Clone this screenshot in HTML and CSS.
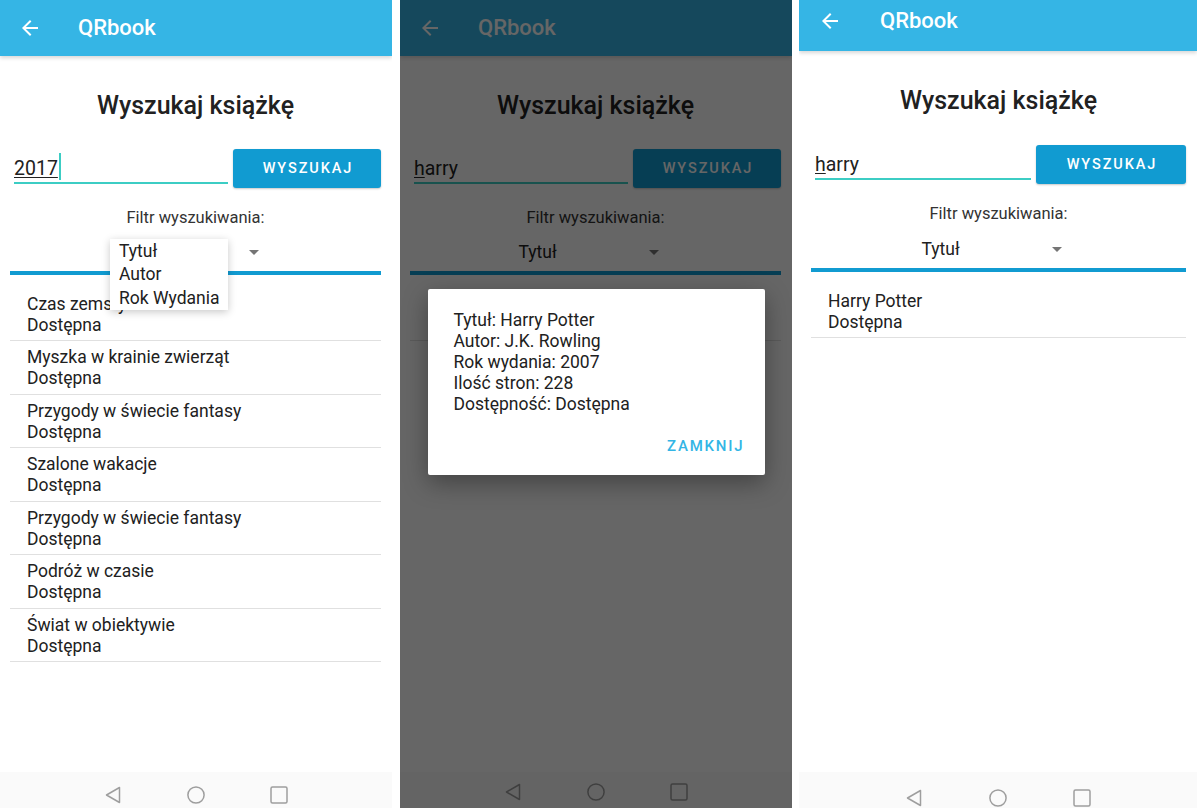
FILE: index.html
```html
<!DOCTYPE html>
<html lang="pl">
<head>
<meta charset="utf-8">
<title>QRbook</title>
<link rel="stylesheet" href="styles.css">
</head>
<body>
<div class="screens">

  <section class="phone phone-1">
    <header class="appbar">
      <svg class="back-icon" viewBox="0 0 24 24"><path d="M20 11H7.83l5.59-5.59L12 4l-8 8 8 8 1.41-1.41L7.83 13H20v-2z"/></svg>
      <span class="appbar-title">QRbook</span>
    </header>
    <main class="content">
      <h1 class="page-title">Wyszukaj książkę</h1>
      <div class="search-row">
        <div class="field"><span class="composing">2017</span><span class="caret"></span></div>
        <button class="btn">WYSZUKAJ</button>
      </div>
      <div class="filter-label">Filtr wyszukiwania:</div>
      <div class="spinner-row">
        <div class="spinner">
          <span>Tytuł</span><span class="spinner-arrow"></span>
          <ul class="dropdown">
            <li>Tytuł</li>
            <li>Autor</li>
            <li>Rok Wydania</li>
          </ul>
        </div>
      </div>
      <div class="rule"></div>
      <ul class="results">
        <li class="result"><div>Czas zemsty</div><div>Dostępna</div></li>
        <li class="result"><div>Myszka w krainie zwierząt</div><div>Dostępna</div></li>
        <li class="result"><div>Przygody w świecie fantasy</div><div>Dostępna</div></li>
        <li class="result"><div>Szalone wakacje</div><div>Dostępna</div></li>
        <li class="result"><div>Przygody w świecie fantasy</div><div>Dostępna</div></li>
        <li class="result"><div>Podróż w czasie</div><div>Dostępna</div></li>
        <li class="result"><div>Świat w obiektywie</div><div>Dostępna</div></li>
      </ul>
    </main>
    <nav class="navbar">
      <svg class="nav-icon" viewBox="0 0 18 18"><path d="M15.5 1.5L2.5 9l13 7.5z"/></svg>
      <svg class="nav-icon" viewBox="0 0 18 18"><circle cx="9" cy="9" r="8.1"/></svg>
      <svg class="nav-icon" viewBox="0 0 18 18"><rect x="1" y="1" width="16" height="16" rx="1.5"/></svg>
    </nav>
  </section>

  <section class="phone phone-2">
    <header class="appbar">
      <svg class="back-icon" viewBox="0 0 24 24"><path d="M20 11H7.83l5.59-5.59L12 4l-8 8 8 8 1.41-1.41L7.83 13H20v-2z"/></svg>
      <span class="appbar-title">QRbook</span>
    </header>
    <main class="content">
      <h1 class="page-title">Wyszukaj książkę</h1>
      <div class="search-row">
        <div class="field"><span class="composing">h</span>arry</div>
        <button class="btn">WYSZUKAJ</button>
      </div>
      <div class="filter-label">Filtr wyszukiwania:</div>
      <div class="spinner-row">
        <div class="spinner"><span>Tytuł</span><span class="spinner-arrow"></span></div>
      </div>
      <div class="rule"></div>
      <ul class="results">
        <li class="result result-covered"></li>
      </ul>
    </main>
    <nav class="navbar">
      <svg class="nav-icon" viewBox="0 0 18 18"><path d="M15.5 1.5L2.5 9l13 7.5z"/></svg>
      <svg class="nav-icon" viewBox="0 0 18 18"><circle cx="9" cy="9" r="8.1"/></svg>
      <svg class="nav-icon" viewBox="0 0 18 18"><rect x="1" y="1" width="16" height="16" rx="1.5"/></svg>
    </nav>
    <div class="scrim">
      <div class="dialog">
        <div class="dialog-body">
          <div>Tytuł: Harry Potter</div>
          <div>Autor: J.K. Rowling</div>
          <div>Rok wydania: 2007</div>
          <div>Ilość stron: 228</div>
          <div>Dostępność: Dostępna</div>
        </div>
        <div class="dialog-actions"><span class="dialog-btn">ZAMKNIJ</span></div>
      </div>
    </div>
  </section>

  <section class="phone phone-3">
    <header class="appbar">
      <svg class="back-icon" viewBox="0 0 24 24"><path d="M20 11H7.83l5.59-5.59L12 4l-8 8 8 8 1.41-1.41L7.83 13H20v-2z"/></svg>
      <span class="appbar-title">QRbook</span>
    </header>
    <main class="content">
      <h1 class="page-title">Wyszukaj książkę</h1>
      <div class="search-row">
        <div class="field"><span class="composing">h</span>arry</div>
        <button class="btn">WYSZUKAJ</button>
      </div>
      <div class="filter-label">Filtr wyszukiwania:</div>
      <div class="spinner-row">
        <div class="spinner"><span>Tytuł</span><span class="spinner-arrow"></span></div>
      </div>
      <div class="rule"></div>
      <ul class="results">
        <li class="result"><div>Harry Potter</div><div>Dostępna</div></li>
      </ul>
    </main>
    <nav class="navbar">
      <svg class="nav-icon" viewBox="0 0 18 18"><path d="M15.5 1.5L2.5 9l13 7.5z"/></svg>
      <svg class="nav-icon" viewBox="0 0 18 18"><circle cx="9" cy="9" r="8.1"/></svg>
      <svg class="nav-icon" viewBox="0 0 18 18"><rect x="1" y="1" width="16" height="16" rx="1.5"/></svg>
    </nav>
  </section>

</div>
</body>
</html>
```

FILE: styles.css
```css
* {
  box-sizing: border-box;
  margin: 0;
  padding: 0;
}

html, body {
  margin: 0;
  background: #ffffff;
  font-family: Roboto, "Noto Sans", "Liberation Sans", sans-serif;
  color: #212121;
}

body {
  width: 1197px;
  height: 808px;
  overflow: hidden;
}

.screens {
  display: flex;
  height: 808px;
}

.phone {
  position: relative;
  flex: none;
  width: 392px;
  height: 808px;
  display: flex;
  flex-direction: column;
  background: #ffffff;
  overflow: hidden;
}

.phone-2 {
  margin-left: 8px;
}

.phone-3 {
  margin-left: 7px;
  width: 398px;
}

/* App bar */
.appbar {
  position: relative;
  z-index: 1;
  flex: none;
  height: 56px;
  display: flex;
  align-items: center;
  padding-left: 18px;
  background: #35b5e5;
  box-shadow: 0 2px 4px rgba(0, 0, 0, 0.16);
}

.back-icon {
  width: 24px;
  height: 24px;
  fill: #ffffff;
  flex: none;
}

.appbar-title {
  margin-left: 36px;
  color: #ffffff;
  font-size: 22px;
  font-weight: 500;
  line-height: 28px;
}

/* Content */
.content {
  flex: 1;
  display: flex;
  flex-direction: column;
  padding: 0 11px 0 10px;
}

.page-title {
  margin-top: 35px;
  text-align: center;
  font-size: 25px;
  line-height: 30px;
  font-weight: 500;
  color: #212121;
}

.search-row {
  margin-top: 28px;
  display: flex;
  align-items: flex-start;
}

.field {
  flex: 1;
  margin-left: 4px;
  height: 35px;
  display: flex;
  align-items: flex-start;
  padding-top: 8px;
  border-bottom: 2px solid #3ccdc4;
  font-size: 19.5px;
  line-height: 24px;
  color: #212121;
}

.composing {
  text-decoration: underline;
  text-decoration-thickness: 1px;
  text-underline-offset: 2px;
}

.caret {
  width: 2px;
  height: 27px;
  margin-top: -4px;
  margin-left: 1px;
  background: #3ccdc4;
}

.btn {
  flex: none;
  width: 148px;
  height: 39px;
  margin-left: 5px;
  border: none;
  border-radius: 3px;
  background: #119bd1;
  color: #ffffff;
  font-family: Roboto, "Noto Sans", sans-serif;
  font-size: 14.5px;
  font-weight: 500;
  line-height: 39px;
  letter-spacing: 1.9px;
  padding-left: 1.9px;
  box-shadow: 0 1px 2px rgba(0, 0, 0, 0.22);
}

.filter-label {
  margin-top: 20px;
  text-align: center;
  font-size: 16.5px;
  line-height: 20px;
  color: #333333;
}

.spinner-row {
  margin-top: 6px;
  height: 36px;
  display: flex;
  justify-content: center;
}

.spinner {
  position: relative;
  width: 175px;
  display: flex;
  align-items: center;
  justify-content: space-between;
  padding: 0 24.5px 0 10.5px;
  font-size: 17.5px;
  color: #212121;
}

.spinner-arrow {
  width: 0;
  height: 0;
  border-left: 5px solid transparent;
  border-right: 5px solid transparent;
  border-top: 5px solid #757575;
}

.dropdown {
  position: absolute;
  z-index: 2;
  left: 2px;
  top: 5px;
  width: 118px;
  padding: 0.5px 0 0 9px;
  list-style: none;
  background: #ffffff;
  box-shadow: 0 2px 8px rgba(0, 0, 0, 0.22);
  font-size: 17.5px;
  line-height: 23.5px;
  color: #212121;
}

.rule {
  flex: none;
  margin-top: 1px;
  height: 4px;
  background: #119bd1;
}

.results {
  margin-top: 12.5px;
  list-style: none;
}

.result {
  padding: 6px 0 4.5px 17px;
  border-bottom: 1px solid #e0e0e0;
  font-size: 17.5px;
  line-height: 21px;
  color: #212121;
}

.result-covered {
  height: 53.5px;
}

/* Navigation bar */
.navbar {
  flex: none;
  height: 36px;
  display: flex;
  justify-content: center;
  align-items: flex-start;
  gap: 65px;
  padding-top: 14px;
  background: #fafafa;
}

.nav-icon {
  width: 18px;
  height: 18px;
  fill: none;
  stroke: #9e9e9e;
  stroke-width: 1.5;
  stroke-linejoin: round;
}

/* Dialog screen */
.phone-2 .navbar {
  padding-top: 11px;
}

.scrim {
  position: absolute;
  inset: 0;
  z-index: 5;
  display: flex;
  justify-content: center;
  align-items: flex-start;
  padding-top: 289px;
  background: rgba(0, 0, 0, 0.6);
}

.dialog {
  width: 337px;
  height: 186px;
  background: #ffffff;
  border-radius: 2px;
  box-shadow: 0 8px 24px rgba(0, 0, 0, 0.35);
}

.dialog-body {
  padding: 20.5px 0 0 26px;
  font-size: 17.5px;
  line-height: 21px;
  color: #212121;
}

.dialog-actions {
  display: flex;
  justify-content: flex-end;
  padding: 21.5px 20px 0 0;
}

.dialog-btn {
  font-size: 15px;
  font-weight: 500;
  line-height: 20px;
  letter-spacing: 1.8px;
  color: #33b5e5;
}

/* Third screenshot (slightly different crop) */
.phone-3 .appbar {
  height: 51px;
  padding-bottom: 10px;
  padding-left: 19px;
}

.phone-3 .appbar-title {
  margin-left: 38px;
}

.phone-3 .content {
  padding: 0 11px 0 12px;
}

.phone-3 .search-row {
  margin-top: 29px;
}

.phone-3 .btn {
  width: 150px;
}

.phone-3 .spinner-row {
  margin-top: 7px;
}

.phone-3 .navbar {
  padding-top: 17px;
  gap: 66px;
}
```
